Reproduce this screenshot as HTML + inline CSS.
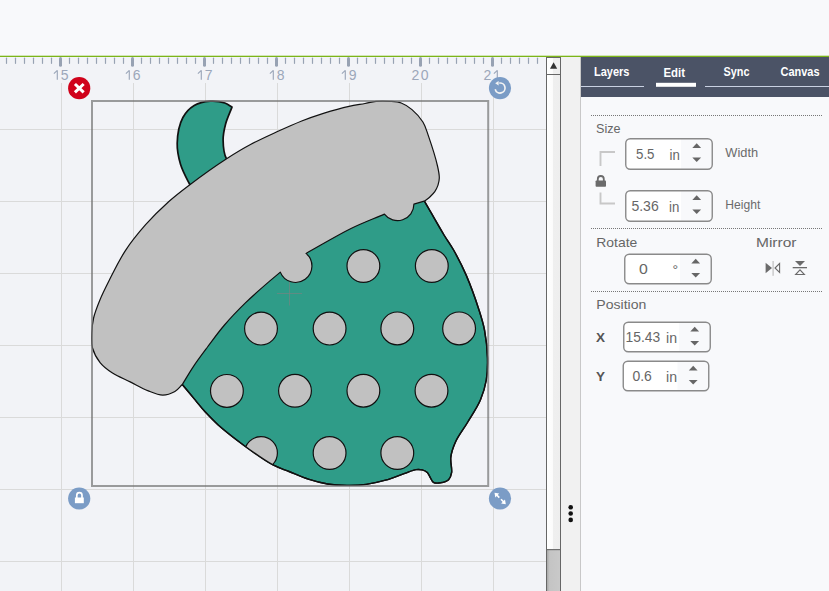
<!DOCTYPE html>
<html><head><meta charset="utf-8">
<style>
*{margin:0;padding:0}
html,body{width:829px;height:591px;overflow:hidden;background:#f8f9fb}
svg{position:absolute;left:0;top:0;display:block}
text{font-family:"Liberation Sans",sans-serif}
</style></head><body>
<svg width="829" height="591" viewBox="0 0 829 591">
<defs>
<linearGradient id="sbg" x1="0" x2="1" y1="0" y2="0"><stop offset="0" stop-color="#ffffff"/><stop offset="0.45" stop-color="#fbfbfb"/><stop offset="0.46" stop-color="#efefef"/><stop offset="1" stop-color="#eeeeee"/></linearGradient>
<linearGradient id="thg" x1="0" x2="1" y1="0" y2="0"><stop offset="0" stop-color="#a8a8a8"/><stop offset="0.2" stop-color="#c4c4c4"/><stop offset="1" stop-color="#c9c9c9"/></linearGradient>
</defs>
<rect x="0" y="0" width="829" height="56" fill="#f8f9fb"/>
<rect x="0" y="55.7" width="829" height="1.4" fill="#7cb518"/>
<rect x="0" y="57" width="546" height="534" fill="#f2f3f7"/>
<g fill="#98a2b3"><rect x="5.9" y="57.6" width="1.2" height="6.3" rx="0.6" fill="#98a2b3"/>
<rect x="14.9" y="57.6" width="1.2" height="6.3" rx="0.6" fill="#98a2b3"/>
<rect x="23.9" y="57.6" width="1.2" height="6.3" rx="0.6" fill="#98a2b3"/>
<rect x="32.9" y="57.6" width="1.2" height="6.3" rx="0.6" fill="#98a2b3"/>
<rect x="41.9" y="57.6" width="1.2" height="6.3" rx="0.6" fill="#98a2b3"/>
<rect x="50.9" y="57.6" width="1.2" height="6.3" rx="0.6" fill="#98a2b3"/>
<rect x="59.0" y="57" width="3" height="9.8" rx="1.5" fill="#98a2b3"/>
<rect x="68.9" y="57.6" width="1.2" height="6.3" rx="0.6" fill="#98a2b3"/>
<rect x="77.9" y="57.6" width="1.2" height="6.3" rx="0.6" fill="#98a2b3"/>
<rect x="86.9" y="57.6" width="1.2" height="6.3" rx="0.6" fill="#98a2b3"/>
<rect x="95.9" y="57.6" width="1.2" height="6.3" rx="0.6" fill="#98a2b3"/>
<rect x="104.9" y="57.6" width="1.2" height="6.3" rx="0.6" fill="#98a2b3"/>
<rect x="113.9" y="57.6" width="1.2" height="6.3" rx="0.6" fill="#98a2b3"/>
<rect x="122.9" y="57.6" width="1.2" height="6.3" rx="0.6" fill="#98a2b3"/>
<rect x="131.0" y="57" width="3" height="9.8" rx="1.5" fill="#98a2b3"/>
<rect x="140.9" y="57.6" width="1.2" height="6.3" rx="0.6" fill="#98a2b3"/>
<rect x="149.9" y="57.6" width="1.2" height="6.3" rx="0.6" fill="#98a2b3"/>
<rect x="158.9" y="57.6" width="1.2" height="6.3" rx="0.6" fill="#98a2b3"/>
<rect x="167.9" y="57.6" width="1.2" height="6.3" rx="0.6" fill="#98a2b3"/>
<rect x="176.9" y="57.6" width="1.2" height="6.3" rx="0.6" fill="#98a2b3"/>
<rect x="185.9" y="57.6" width="1.2" height="6.3" rx="0.6" fill="#98a2b3"/>
<rect x="194.9" y="57.6" width="1.2" height="6.3" rx="0.6" fill="#98a2b3"/>
<rect x="203.0" y="57" width="3" height="9.8" rx="1.5" fill="#98a2b3"/>
<rect x="212.9" y="57.6" width="1.2" height="6.3" rx="0.6" fill="#98a2b3"/>
<rect x="221.9" y="57.6" width="1.2" height="6.3" rx="0.6" fill="#98a2b3"/>
<rect x="230.9" y="57.6" width="1.2" height="6.3" rx="0.6" fill="#98a2b3"/>
<rect x="239.9" y="57.6" width="1.2" height="6.3" rx="0.6" fill="#98a2b3"/>
<rect x="248.9" y="57.6" width="1.2" height="6.3" rx="0.6" fill="#98a2b3"/>
<rect x="257.9" y="57.6" width="1.2" height="6.3" rx="0.6" fill="#98a2b3"/>
<rect x="266.9" y="57.6" width="1.2" height="6.3" rx="0.6" fill="#98a2b3"/>
<rect x="275.0" y="57" width="3" height="9.8" rx="1.5" fill="#98a2b3"/>
<rect x="284.9" y="57.6" width="1.2" height="6.3" rx="0.6" fill="#98a2b3"/>
<rect x="293.9" y="57.6" width="1.2" height="6.3" rx="0.6" fill="#98a2b3"/>
<rect x="302.9" y="57.6" width="1.2" height="6.3" rx="0.6" fill="#98a2b3"/>
<rect x="311.9" y="57.6" width="1.2" height="6.3" rx="0.6" fill="#98a2b3"/>
<rect x="320.9" y="57.6" width="1.2" height="6.3" rx="0.6" fill="#98a2b3"/>
<rect x="329.9" y="57.6" width="1.2" height="6.3" rx="0.6" fill="#98a2b3"/>
<rect x="338.9" y="57.6" width="1.2" height="6.3" rx="0.6" fill="#98a2b3"/>
<rect x="347.0" y="57" width="3" height="9.8" rx="1.5" fill="#98a2b3"/>
<rect x="356.9" y="57.6" width="1.2" height="6.3" rx="0.6" fill="#98a2b3"/>
<rect x="365.9" y="57.6" width="1.2" height="6.3" rx="0.6" fill="#98a2b3"/>
<rect x="374.9" y="57.6" width="1.2" height="6.3" rx="0.6" fill="#98a2b3"/>
<rect x="383.9" y="57.6" width="1.2" height="6.3" rx="0.6" fill="#98a2b3"/>
<rect x="392.9" y="57.6" width="1.2" height="6.3" rx="0.6" fill="#98a2b3"/>
<rect x="401.9" y="57.6" width="1.2" height="6.3" rx="0.6" fill="#98a2b3"/>
<rect x="410.9" y="57.6" width="1.2" height="6.3" rx="0.6" fill="#98a2b3"/>
<rect x="419.0" y="57" width="3" height="9.8" rx="1.5" fill="#98a2b3"/>
<rect x="428.9" y="57.6" width="1.2" height="6.3" rx="0.6" fill="#98a2b3"/>
<rect x="437.9" y="57.6" width="1.2" height="6.3" rx="0.6" fill="#98a2b3"/>
<rect x="446.9" y="57.6" width="1.2" height="6.3" rx="0.6" fill="#98a2b3"/>
<rect x="455.9" y="57.6" width="1.2" height="6.3" rx="0.6" fill="#98a2b3"/>
<rect x="464.9" y="57.6" width="1.2" height="6.3" rx="0.6" fill="#98a2b3"/>
<rect x="473.9" y="57.6" width="1.2" height="6.3" rx="0.6" fill="#98a2b3"/>
<rect x="482.9" y="57.6" width="1.2" height="6.3" rx="0.6" fill="#98a2b3"/>
<rect x="491.0" y="57" width="3" height="9.8" rx="1.5" fill="#98a2b3"/>
<rect x="500.9" y="57.6" width="1.2" height="6.3" rx="0.6" fill="#98a2b3"/>
<rect x="509.9" y="57.6" width="1.2" height="6.3" rx="0.6" fill="#98a2b3"/>
<rect x="518.9" y="57.6" width="1.2" height="6.3" rx="0.6" fill="#98a2b3"/>
<rect x="527.9" y="57.6" width="1.2" height="6.3" rx="0.6" fill="#98a2b3"/>
<rect x="536.9" y="57.6" width="1.2" height="6.3" rx="0.6" fill="#98a2b3"/></g>
<g stroke="#dadada" stroke-width="1"><line x1="61.5" y1="83" x2="61.5" y2="591"/>
<line x1="133.5" y1="83" x2="133.5" y2="591"/>
<line x1="205.5" y1="83" x2="205.5" y2="591"/>
<line x1="277.5" y1="83" x2="277.5" y2="591"/>
<line x1="349.5" y1="83" x2="349.5" y2="591"/>
<line x1="421.5" y1="83" x2="421.5" y2="591"/>
<line x1="493.5" y1="83" x2="493.5" y2="591"/>
<line x1="0" y1="129.5" x2="546" y2="129.5"/>
<line x1="0" y1="201.5" x2="546" y2="201.5"/>
<line x1="0" y1="273.5" x2="546" y2="273.5"/>
<line x1="0" y1="345.5" x2="546" y2="345.5"/>
<line x1="0" y1="417.5" x2="546" y2="417.5"/>
<line x1="0" y1="489.5" x2="546" y2="489.5"/>
<line x1="0" y1="561.5" x2="546" y2="561.5"/></g>
<g font-size="14" fill="#9ca7ba"><path d="M53.9,73.6 L57.3,70.3 M57.3,70.3 V79.8" fill="none" stroke="#9ca7ba" stroke-width="1.15" stroke-linejoin="round"/>
<text x="60.7" y="79.8">5</text>
<path d="M125.9,73.6 L129.3,70.3 M129.3,70.3 V79.8" fill="none" stroke="#9ca7ba" stroke-width="1.15" stroke-linejoin="round"/>
<text x="132.7" y="79.8">6</text>
<path d="M197.9,73.6 L201.3,70.3 M201.3,70.3 V79.8" fill="none" stroke="#9ca7ba" stroke-width="1.15" stroke-linejoin="round"/>
<text x="204.7" y="79.8">7</text>
<path d="M269.9,73.6 L273.3,70.3 M273.3,70.3 V79.8" fill="none" stroke="#9ca7ba" stroke-width="1.15" stroke-linejoin="round"/>
<text x="276.7" y="79.8">8</text>
<path d="M341.9,73.6 L345.3,70.3 M345.3,70.3 V79.8" fill="none" stroke="#9ca7ba" stroke-width="1.15" stroke-linejoin="round"/>
<text x="348.7" y="79.8">9</text>
<text x="411.6" y="79.8">2</text>
<text x="420.7" y="79.8">0</text>
<text x="483.6" y="79.8">2</text>
<path d="M493.9,73.6 L497.3,70.3 M497.3,70.3 V79.8" fill="none" stroke="#9ca7ba" stroke-width="1.15" stroke-linejoin="round"/></g>
<defs><clipPath id="bc"><path d="M424.7,201.6 C431.1,212.7 438.6,226.1 444.0,235.0 C447.7,241.0 450.3,244.2 453.6,250.0 C457.7,257.3 462.3,266.2 466.3,275.4 C470.8,285.9 475.8,300.0 479.0,310.0 C481.4,317.5 483.1,322.7 484.5,330.0 C486.1,338.5 487.3,349.2 487.5,358.0 C487.7,365.8 487.5,372.9 486.3,380.0 C485.1,386.9 483.3,393.3 480.4,400.0 C477.2,407.5 471.8,415.3 467.5,422.5 C463.5,429.3 458.3,435.7 455.5,442.0 C453.1,447.3 451.4,452.2 450.8,457.4 C450.2,462.4 452.3,468.6 451.6,472.6 C451.1,475.5 450.3,478.0 448.6,479.7 C446.7,481.5 443.2,482.4 440.5,482.8 C438.1,483.2 435.1,483.3 433.4,482.3 C431.9,481.4 431.3,479.3 430.3,477.7 C429.3,476.1 428.7,473.9 427.3,472.6 C426.0,471.3 424.0,470.4 422.2,469.9 C420.3,469.4 418.4,469.3 416.1,469.6 C412.9,470.0 409.1,471.9 404.8,473.4 C399.2,475.3 392.0,478.4 385.5,480.2 C379.1,482.0 372.7,483.5 366.2,484.4 C359.8,485.3 353.3,485.5 346.9,485.4 C340.5,485.3 334.0,485.0 327.6,484.0 C321.1,483.0 314.7,481.3 308.3,479.2 C301.8,477.1 295.2,474.0 289.0,471.5 C283.3,469.2 278.6,467.9 272.5,464.7 C264.1,460.2 253.1,452.2 244.0,445.5 C235.1,438.9 225.2,431.2 218.2,425.0 C213.0,420.3 209.3,416.3 205.3,412.0 C201.6,408.0 198.7,404.2 195.1,399.9 C191.1,395.1 186.6,389.6 182.3,384.5 L170,370 L290,240 L420,190 Z"/></clipPath></defs>
<g stroke="#111" stroke-linejoin="round">
<path d="M232.0,107.1 C229.6,105.7 227.7,104.0 224.8,103.0 C220.9,101.7 215.2,100.9 210.3,101.2 C205.0,101.6 198.8,102.8 194.2,105.5 C189.7,108.2 185.7,112.3 182.9,117.5 C179.4,124.1 177.4,135.1 177.2,143.3 C177.0,150.6 178.5,157.5 180.5,164.2 C182.5,170.8 186.3,177.8 189.0,183.0 C191.1,186.9 193.0,189.7 195.0,193.0 L240,170 C235.5,166.2 229.2,163.5 226.4,158.6 C223.5,153.6 223.2,146.1 223.1,140.1 C223.0,134.6 224.2,129.4 225.6,124.0 C227.1,118.4 229.9,112.7 232.0,107.1 Z" fill="#2f9c88" stroke-width="1.7"/>
<path d="M424.7,201.6 C431.1,212.7 438.6,226.1 444.0,235.0 C447.7,241.0 450.3,244.2 453.6,250.0 C457.7,257.3 462.3,266.2 466.3,275.4 C470.8,285.9 475.8,300.0 479.0,310.0 C481.4,317.5 483.1,322.7 484.5,330.0 C486.1,338.5 487.3,349.2 487.5,358.0 C487.7,365.8 487.5,372.9 486.3,380.0 C485.1,386.9 483.3,393.3 480.4,400.0 C477.2,407.5 471.8,415.3 467.5,422.5 C463.5,429.3 458.3,435.7 455.5,442.0 C453.1,447.3 451.4,452.2 450.8,457.4 C450.2,462.4 452.3,468.6 451.6,472.6 C451.1,475.5 450.3,478.0 448.6,479.7 C446.7,481.5 443.2,482.4 440.5,482.8 C438.1,483.2 435.1,483.3 433.4,482.3 C431.9,481.4 431.3,479.3 430.3,477.7 C429.3,476.1 428.7,473.9 427.3,472.6 C426.0,471.3 424.0,470.4 422.2,469.9 C420.3,469.4 418.4,469.3 416.1,469.6 C412.9,470.0 409.1,471.9 404.8,473.4 C399.2,475.3 392.0,478.4 385.5,480.2 C379.1,482.0 372.7,483.5 366.2,484.4 C359.8,485.3 353.3,485.5 346.9,485.4 C340.5,485.3 334.0,485.0 327.6,484.0 C321.1,483.0 314.7,481.3 308.3,479.2 C301.8,477.1 295.2,474.0 289.0,471.5 C283.3,469.2 278.6,467.9 272.5,464.7 C264.1,460.2 253.1,452.2 244.0,445.5 C235.1,438.9 225.2,431.2 218.2,425.0 C213.0,420.3 209.3,416.3 205.3,412.0 C201.6,408.0 198.7,404.2 195.1,399.9 C191.1,395.1 186.6,389.6 182.3,384.5 L170,370 L290,240 L420,190 Z" fill="#2f9c88" stroke-width="1.4"/>
<g fill="#c1c1c1" clip-path="url(#bc)" stroke-width="1.2"><circle cx="363.4" cy="266" r="16.4"/>
<circle cx="431.8" cy="266" r="16.4"/>
<circle cx="261" cy="328.6" r="16.4"/>
<circle cx="329.6" cy="328.6" r="16.4"/>
<circle cx="397.3" cy="328.4" r="16.4"/>
<circle cx="459.1" cy="328.4" r="16.4"/>
<circle cx="226.9" cy="390.9" r="16.4"/>
<circle cx="295" cy="390.8" r="16.4"/>
<circle cx="363.4" cy="390.7" r="16.4"/>
<circle cx="431.5" cy="390.7" r="16.4"/>
<circle cx="261" cy="453" r="16.4"/>
<circle cx="329.6" cy="453" r="16.4"/>
<circle cx="397.3" cy="453" r="16.4"/></g>
<path d="M424.7,201.6 C431.1,212.7 438.6,226.1 444.0,235.0 C447.7,241.0 450.3,244.2 453.6,250.0 C457.7,257.3 462.3,266.2 466.3,275.4 C470.8,285.9 475.8,300.0 479.0,310.0 C481.4,317.5 483.1,322.7 484.5,330.0 C486.1,338.5 487.3,349.2 487.5,358.0 C487.7,365.8 487.5,372.9 486.3,380.0 C485.1,386.9 483.3,393.3 480.4,400.0 C477.2,407.5 471.8,415.3 467.5,422.5 C463.5,429.3 458.3,435.7 455.5,442.0 C453.1,447.3 451.4,452.2 450.8,457.4 C450.2,462.4 452.3,468.6 451.6,472.6 C451.1,475.5 450.3,478.0 448.6,479.7 C446.7,481.5 443.2,482.4 440.5,482.8 C438.1,483.2 435.1,483.3 433.4,482.3 C431.9,481.4 431.3,479.3 430.3,477.7 C429.3,476.1 428.7,473.9 427.3,472.6 C426.0,471.3 424.0,470.4 422.2,469.9 C420.3,469.4 418.4,469.3 416.1,469.6 C412.9,470.0 409.1,471.9 404.8,473.4 C399.2,475.3 392.0,478.4 385.5,480.2 C379.1,482.0 372.7,483.5 366.2,484.4 C359.8,485.3 353.3,485.5 346.9,485.4 C340.5,485.3 334.0,485.0 327.6,484.0 C321.1,483.0 314.7,481.3 308.3,479.2 C301.8,477.1 295.2,474.0 289.0,471.5 C283.3,469.2 278.6,467.9 272.5,464.7 C264.1,460.2 253.1,452.2 244.0,445.5 C235.1,438.9 225.2,431.2 218.2,425.0 C213.0,420.3 209.3,416.3 205.3,412.0 C201.6,408.0 198.7,404.2 195.1,399.9 C191.1,395.1 186.6,389.6 182.3,384.5 L170,370 L290,240 L420,190 Z" fill="none" stroke-width="1.4"/>
<path d="M182.3,384.5 C179.8,386.8 177.9,389.8 174.9,391.5 C171.5,393.4 167.0,395.1 162.8,395.1 C158.2,395.1 153.3,392.9 148.3,390.9 C142.5,388.6 136.2,384.9 130.2,381.9 C124.2,378.9 117.3,376.3 112.1,372.8 C107.5,369.7 103.3,366.7 100.1,362.6 C96.8,358.4 93.9,353.1 92.5,348.0 C91.2,343.2 91.6,338.0 91.8,333.0 C92.0,328.0 92.4,323.2 93.6,318.0 C94.9,312.2 97.4,306.1 99.9,300.0 C102.6,293.4 105.7,287.3 109.4,280.0 C113.9,271.1 119.3,259.9 125.4,250.6 C131.4,241.4 138.4,232.9 145.6,224.7 C152.8,216.6 160.9,208.6 168.6,201.7 C175.7,195.3 182.0,190.6 190.2,184.4 C200.7,176.5 215.6,165.8 226.6,158.7 C235.3,153.1 242.2,148.9 250.5,144.5 C259.0,139.9 268.2,135.8 276.9,131.8 C285.3,128.0 293.7,124.2 301.7,121.0 C309.1,118.1 315.8,115.8 323.4,113.4 C331.5,110.9 341.4,108.1 349.0,106.4 C354.9,105.1 360.2,104.4 365.0,103.5 C369.0,102.7 372.1,101.7 376.0,101.3 C380.4,100.9 385.6,101.0 390.0,101.3 C394.0,101.6 397.6,101.7 401.2,103.0 C405.0,104.4 408.6,106.7 412.0,109.6 C415.9,112.9 420.1,117.5 422.9,122.0 C425.6,126.3 426.5,130.5 428.5,136.1 C431.3,144.2 435.8,158.2 437.5,166.0 C438.6,170.8 439.4,174.5 439.3,178.0 C439.3,180.7 438.7,182.8 438.0,185.1 C437.2,187.4 436.1,189.7 434.8,191.6 C433.5,193.5 431.8,195.1 430.1,196.7 C428.5,198.2 426.7,199.5 425.0,200.9 L413.9,204.2 A16.4,16.4 0 0 1 384.4,214.1 C373.3,218.9 362.8,222.7 351.0,228.5 C337.0,235.4 321.0,245.1 306.0,253.4 A16.4,16.4 0 1 1 280.3,272.1 C276.8,275.1 274.1,277.3 269.9,280.9 C263.4,286.5 253.1,295.4 245.4,302.9 C238.0,310.1 230.9,317.5 224.5,325.0 C218.3,332.2 212.9,339.8 207.5,347.0 C202.5,353.7 197.5,360.3 193.2,366.8 C189.2,372.8 185.9,378.6 182.3,384.5 Z" fill="#c1c1c1" stroke-width="1.2"/>
</g>
<rect x="92" y="101" width="396.2" height="385" fill="none" stroke="#747474" stroke-opacity="0.7" stroke-width="2"/>
<g stroke="#808080" stroke-opacity="0.6" stroke-width="1"><line x1="277" y1="293.5" x2="302" y2="293.5"/><line x1="289.5" y1="282" x2="289.5" y2="305.5"/></g>
<circle cx="79.2" cy="88.2" r="11.1" fill="#d0021b"/>
<path d="M76,85 L82.6,91.4 M82.6,85 L76,91.4" stroke="#fff" stroke-width="3" stroke-linecap="square"/>
<circle cx="500" cy="88.1" r="11.1" fill="#7b9cc6"/>
<path d="M499.3,83.1 A5,5 0 1 1 495.2,89.3" fill="none" stroke="#f3f3f3" stroke-width="1.7"/>
<path d="M495.2,83.3 L498.6,81.1 L498.6,85.5 Z" fill="#f3f3f3"/>
<circle cx="79.2" cy="498.5" r="11.1" fill="#7b9cc6"/>
<rect x="74.9" y="497.5" width="8.9" height="5.7" fill="#fff"/>
<path d="M76.8,498 V495.2 A2.6,2.6 0 0 1 82,495.2 V498" fill="none" stroke="#fff" stroke-width="1.7"/>
<circle cx="500" cy="498.5" r="11.1" fill="#7b9cc6"/>
<g fill="#fff"><path d="M494.5,492.8 L499.2,493.6 L495.3,497.5 Z"/><path d="M505.8,504.2 L501.1,503.4 L505,499.5 Z"/></g>
<g stroke="#fff" stroke-width="1.6"><line x1="496" y1="494.3" x2="499.3" y2="497.6"/><line x1="504.3" y1="502.5" x2="501" y2="499.2"/></g>
<!-- scrollbar -->
<rect x="546" y="57" width="15" height="534" fill="#666"/>
<rect x="547" y="58" width="13" height="533" fill="url(#sbg)"/>
<rect x="547" y="74" width="13" height="1" fill="#666"/>
<path d="M550,68.8 L553.6,62.2 L557.2,68.8 Z" fill="#333"/>
<rect x="547" y="549" width="13" height="42" fill="url(#thg)"/>
<rect x="547" y="549" width="13" height="1.2" fill="#6f6f6f"/>
<rect x="561" y="57" width="19" height="534" fill="#f1f1f1"/>
<rect x="580" y="57" width="1" height="534" fill="#c8c8c8"/>
<g fill="#111"><circle cx="570.7" cy="507.2" r="2.3"/><circle cx="570.7" cy="513.5" r="2.3"/><circle cx="570.7" cy="519.9" r="2.3"/></g>
<rect x="581" y="57" width="248" height="40" fill="#4b5366"/>
<rect x="581" y="86" width="63" height="1" fill="#c9d1e2"/>
<rect x="656" y="82.8" width="40" height="4" fill="#fff"/>
<rect x="705" y="86" width="124" height="1" fill="#c9d1e2"/>
<text x="594" y="76" font-size="12.5" fill="#fff" font-weight="bold" textLength="35.5" lengthAdjust="spacingAndGlyphs">Layers</text>
<text x="663.5" y="77" font-size="12.5" fill="#fff" font-weight="bold" textLength="21.5" lengthAdjust="spacingAndGlyphs">Edit</text>
<text x="723.5" y="76" font-size="12.5" fill="#fff" font-weight="bold" textLength="26" lengthAdjust="spacingAndGlyphs">Sync</text>
<text x="780.5" y="76" font-size="12.5" fill="#fff" font-weight="bold" textLength="39" lengthAdjust="spacingAndGlyphs">Canvas</text>
<line x1="591" y1="115.5" x2="822" y2="115.5" stroke="#777" stroke-width="1" stroke-dasharray="1,1"/>
<line x1="591" y1="228.5" x2="822" y2="228.5" stroke="#777" stroke-width="1" stroke-dasharray="1,1"/>
<line x1="591" y1="291.5" x2="822" y2="291.5" stroke="#777" stroke-width="1" stroke-dasharray="1,1"/>
<text x="596" y="132.7" font-size="13" fill="#666" textLength="24.5" lengthAdjust="spacingAndGlyphs">Size</text>
<text x="596.3" y="247" font-size="13" fill="#666" textLength="41" lengthAdjust="spacingAndGlyphs">Rotate</text>
<text x="756" y="247" font-size="13" fill="#666" textLength="40.5" lengthAdjust="spacingAndGlyphs">Mirror</text>
<text x="596.3" y="308.7" font-size="13" fill="#666" textLength="50" lengthAdjust="spacingAndGlyphs">Position</text>
<text x="725.3" y="156.5" font-size="12" fill="#6b6b6b" textLength="32.8" lengthAdjust="spacingAndGlyphs">Width</text>
<text x="725.3" y="209" font-size="12" fill="#6b6b6b" textLength="35" lengthAdjust="spacingAndGlyphs">Height</text>
<text x="596" y="341.8" font-size="13" fill="#555" font-weight="bold" textLength="9" lengthAdjust="spacingAndGlyphs">X</text>
<text x="596" y="380.7" font-size="13" fill="#555" font-weight="bold" textLength="9" lengthAdjust="spacingAndGlyphs">Y</text>
<path d="M600.5,166 V152 H615" fill="none" stroke="#c8c8c8" stroke-width="1.9"/>
<path d="M600.5,192.5 V203.5 H615" fill="none" stroke="#c8c8c8" stroke-width="1.9"/>
<rect x="595.6" y="180.5" width="10.4" height="6.2" rx="0.8" fill="#6b6b6b"/>
<path d="M597.8,181 V179 A3,3 0 0 1 603.8,179 V181" fill="none" stroke="#6b6b6b" stroke-width="1.8"/>
<rect x="625.75" y="138.75" width="86.5" height="30.5" rx="4.5" fill="#fff"/>
<path d="M681,138.75 H707.75 A4.5,4.5 0 0 1 712.25,143.25 V164.75 A4.5,4.5 0 0 1 707.75,169.25 H681 Z" fill="#f8f9fb"/>
<rect x="625.75" y="138.75" width="86.5" height="30.5" rx="4.5" fill="none" stroke="#8a8a8a" stroke-width="1.4"/>
<path d="M692.3000000000001,148 L696.7,143.3 L701.1,148 Z" fill="#666"/>
<path d="M692.3000000000001,157.4 L696.7,162.1 L701.1,157.4 Z" fill="#666"/>
<text x="636" y="159" font-size="14.5" fill="#666" textLength="18.5" lengthAdjust="spacingAndGlyphs">5.5</text>
<text x="669.5" y="160" font-size="14" fill="#666" textLength="10.3" lengthAdjust="spacingAndGlyphs">in</text>
<rect x="625.75" y="190.75" width="86.5" height="30.5" rx="4.5" fill="#fff"/>
<path d="M681,190.75 H707.75 A4.5,4.5 0 0 1 712.25,195.25 V216.75 A4.5,4.5 0 0 1 707.75,221.25 H681 Z" fill="#f8f9fb"/>
<rect x="625.75" y="190.75" width="86.5" height="30.5" rx="4.5" fill="none" stroke="#8a8a8a" stroke-width="1.4"/>
<path d="M692.3000000000001,200 L696.7,195.3 L701.1,200 Z" fill="#666"/>
<path d="M692.3000000000001,209.4 L696.7,214.1 L701.1,209.4 Z" fill="#666"/>
<text x="631.4" y="211" font-size="14.5" fill="#666" textLength="27.3" lengthAdjust="spacingAndGlyphs">5.36</text>
<text x="669" y="212" font-size="14" fill="#666" textLength="10.3" lengthAdjust="spacingAndGlyphs">in</text>
<rect x="624.75" y="254.25" width="86.5" height="29.5" rx="4.5" fill="#fff"/>
<path d="M680,254.25 H706.75 A4.5,4.5 0 0 1 711.25,258.75 V279.25 A4.5,4.5 0 0 1 706.75,283.75 H680 Z" fill="#f8f9fb"/>
<rect x="624.75" y="254.25" width="86.5" height="29.5" rx="4.5" fill="none" stroke="#8a8a8a" stroke-width="1.4"/>
<path d="M691.3000000000001,263.5 L695.7,258.8 L700.1,263.5 Z" fill="#666"/>
<path d="M691.3000000000001,272.9 L695.7,277.6 L700.1,272.9 Z" fill="#666"/>
<text x="639" y="274.0" font-size="14.5" fill="#666" textLength="8.8" lengthAdjust="spacingAndGlyphs">0</text>
<text x="672.5" y="275.0" font-size="14" fill="#666">°</text>
<rect x="623.75" y="322.25" width="86.5" height="29.5" rx="4.5" fill="#fff"/>
<path d="M679,322.25 H705.75 A4.5,4.5 0 0 1 710.25,326.75 V347.25 A4.5,4.5 0 0 1 705.75,351.75 H679 Z" fill="#f8f9fb"/>
<rect x="623.75" y="322.25" width="86.5" height="29.5" rx="4.5" fill="none" stroke="#8a8a8a" stroke-width="1.4"/>
<path d="M690.3000000000001,331.5 L694.7,326.8 L699.1,331.5 Z" fill="#666"/>
<path d="M690.3000000000001,340.9 L694.7,345.6 L699.1,340.9 Z" fill="#666"/>
<text x="625.6" y="341.8" font-size="14.5" fill="#666" textLength="34.6" lengthAdjust="spacingAndGlyphs">15.43</text>
<text x="666" y="342.8" font-size="14" fill="#666" textLength="11" lengthAdjust="spacingAndGlyphs">in</text>
<rect x="623.25" y="361.25" width="85.5" height="29.5" rx="4.5" fill="#fff"/>
<path d="M677.5,361.25 H704.25 A4.5,4.5 0 0 1 708.75,365.75 V386.25 A4.5,4.5 0 0 1 704.25,390.75 H677.5 Z" fill="#f8f9fb"/>
<rect x="623.25" y="361.25" width="85.5" height="29.5" rx="4.5" fill="none" stroke="#8a8a8a" stroke-width="1.4"/>
<path d="M688.8000000000001,370.5 L693.2,365.8 L697.6,370.5 Z" fill="#666"/>
<path d="M688.8000000000001,379.9 L693.2,384.6 L697.6,379.9 Z" fill="#666"/>
<text x="632.4" y="380.8" font-size="14.5" fill="#666" textLength="19.4" lengthAdjust="spacingAndGlyphs">0.6</text>
<text x="666" y="381.8" font-size="14" fill="#666" textLength="11" lengthAdjust="spacingAndGlyphs">in</text>
<path d="M765.6,262.7 L772,268 L765.6,273.2 Z" fill="#6b6b6b"/>
<rect x="772.4" y="261" width="1.4" height="14.8" fill="#c8c8c8"/>
<path d="M779.6,263.5 L775,268 L779.6,272.5 Z" fill="none" stroke="#6b6b6b" stroke-width="1.1"/>
<path d="M795,261 L805,261 L800,266 Z" fill="#6b6b6b"/>
<rect x="792.7" y="267" width="14.3" height="1.3" fill="#6b6b6b"/>
<path d="M795.6,274.5 L804.4,274.5 L800,269.8 Z" fill="none" stroke="#6b6b6b" stroke-width="1.1"/>
</svg>
</body></html>
